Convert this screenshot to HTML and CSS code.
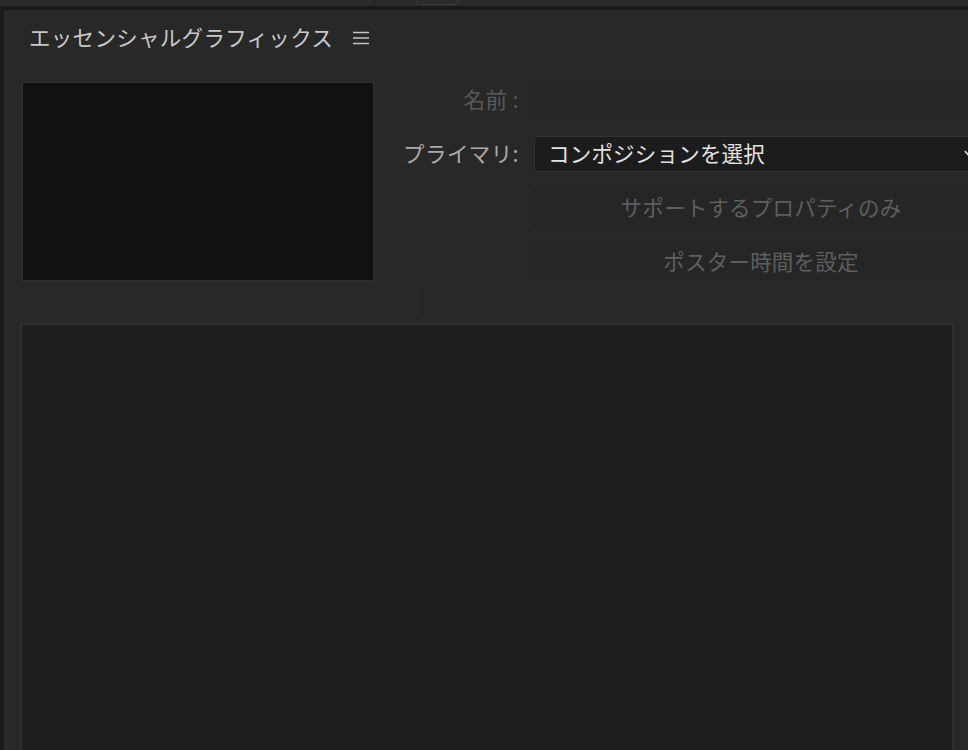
FILE: index.html
```html
<!DOCTYPE html>
<html lang="ja">
<head>
<meta charset="utf-8">
<title>エッセンシャルグラフィックス</title>
<link rel="stylesheet" href="styles.css">
</head>
<body>

<div class="topbar">
	<span class="tab-sep"></span>
	<span class="tab-knob"></span>
</div>

<div class="panel">
	<div class="panel-head">
		<span class="panel-title">エッセンシャルグラフィックス</span>
		<svg class="menu-icon" width="16" height="14" viewBox="0 0 16 14">
			<path d="M0 1.5H16M0 7H16M0 12.5H16" stroke="#c4c4c4" stroke-width="1.6" fill="none"/>
		</svg>
	</div>

	<div class="top">
		<div class="thumb"></div>

		<div class="form">
			<label class="lbl dim">名前 :</label>
			<div class="field name-field"></div>

			<label class="lbl">プライマリ:</label>
			<div class="field select">
				<span>コンポジションを選択</span>
				<svg class="chev" width="12" height="8" viewBox="0 0 12 8">
					<path d="M0.8 1L6 6.6L11.2 1" stroke="#d4d4d4" stroke-width="1.7" fill="none"/>
				</svg>
			</div>

			<span></span>
			<div class="field btn">サポートするプロパティのみ</div>

			<span></span>
			<div class="field btn">ポスター時間を設定</div>
		</div>
	</div>

	<div class="divider"></div>

	<div class="layers"></div>
</div>

</body>
</html>
```

FILE: styles.css
```css
html, body {
	height: 100%;
}

body {
	margin: 0;
	background: #1b1b1b;
	font-family: "Noto Sans CJK JP", "Noto Sans", sans-serif;
	overflow: hidden;
	-webkit-font-smoothing: antialiased;
}

/* strip of the panel above */
.topbar {
	height: 6px;
	background: #2b2b2b;
	border-bottom: 4px solid #1a1a1a;
	position: relative;
}

.tab-sep {
	position: absolute;
	left: 373px;
	top: 0;
	width: 2px;
	height: 6px;
	background: #232323;
}

.tab-knob {
	position: absolute;
	left: 416px;
	top: 0;
	width: 40px;
	height: 4px;
	border: 1px solid #3a3a3a;
	border-top: 0;
	border-radius: 0 0 4px 4px;
}

.panel {
	margin-left: 4px;
	height: calc(100% - 10px);
	background: #282828;
	overflow: hidden;
}

.panel-head {
	height: 54px;
	display: flex;
	align-items: center;
	padding-left: 25px;
	gap: 20px;
}

.panel-title {
	font-size: 21.5px;
	letter-spacing: 0.3px;
	color: #c8c8c8;
	line-height: 1;
}

.menu-icon {
	display: block;
	margin-top: 2px;
}

.top {
	display: flex;
	padding: 18px 0 0 18px;
}

.thumb {
	flex: none;
	width: 350px;
	height: 197px;
	background: #111;
	border: 1px solid #2f2f2f;
}

.form {
	flex: none;
	display: grid;
	grid-template-columns: 145px 454px;
	grid-auto-rows: 36px;
	column-gap: 15px;
	row-gap: 18px;
}

.lbl {
	font-size: 21.5px;
	letter-spacing: 0.4px;
	color: #aaa;
	text-align: right;
	line-height: 34px;
	white-space: nowrap;
}

.lbl.dim {
	color: #5a5a5a;
}

.field {
	box-sizing: border-box;
	font-size: 21.5px;
	letter-spacing: 0.2px;
	line-height: 1;
	padding-bottom: 2px;
}

.name-field {
	background: #262626;
}

.select {
	display: flex;
	align-items: center;
	justify-content: space-between;
	padding: 0 11px 2px 13px;
	background: #1c1c1c;
	border: 1px solid #343434;
	border-radius: 4px;
	color: #e2e2e2;
}

.chev {
	display: block;
	margin-top: 2px;
}

.btn {
	display: flex;
	align-items: center;
	justify-content: center;
	background: #262626;
	color: #5e5e5e;
}

.divider {
	height: 28px;
	margin: 7px 0 7px 418px;
	border-left: 1px solid #232323;
}

.layers {
	width: 930px;
	height: 500px;
	margin-left: 16px;
	background: #1e1e1e;
	border: 2px solid #2f2f2f;
	border-bottom: 0;
}
```
